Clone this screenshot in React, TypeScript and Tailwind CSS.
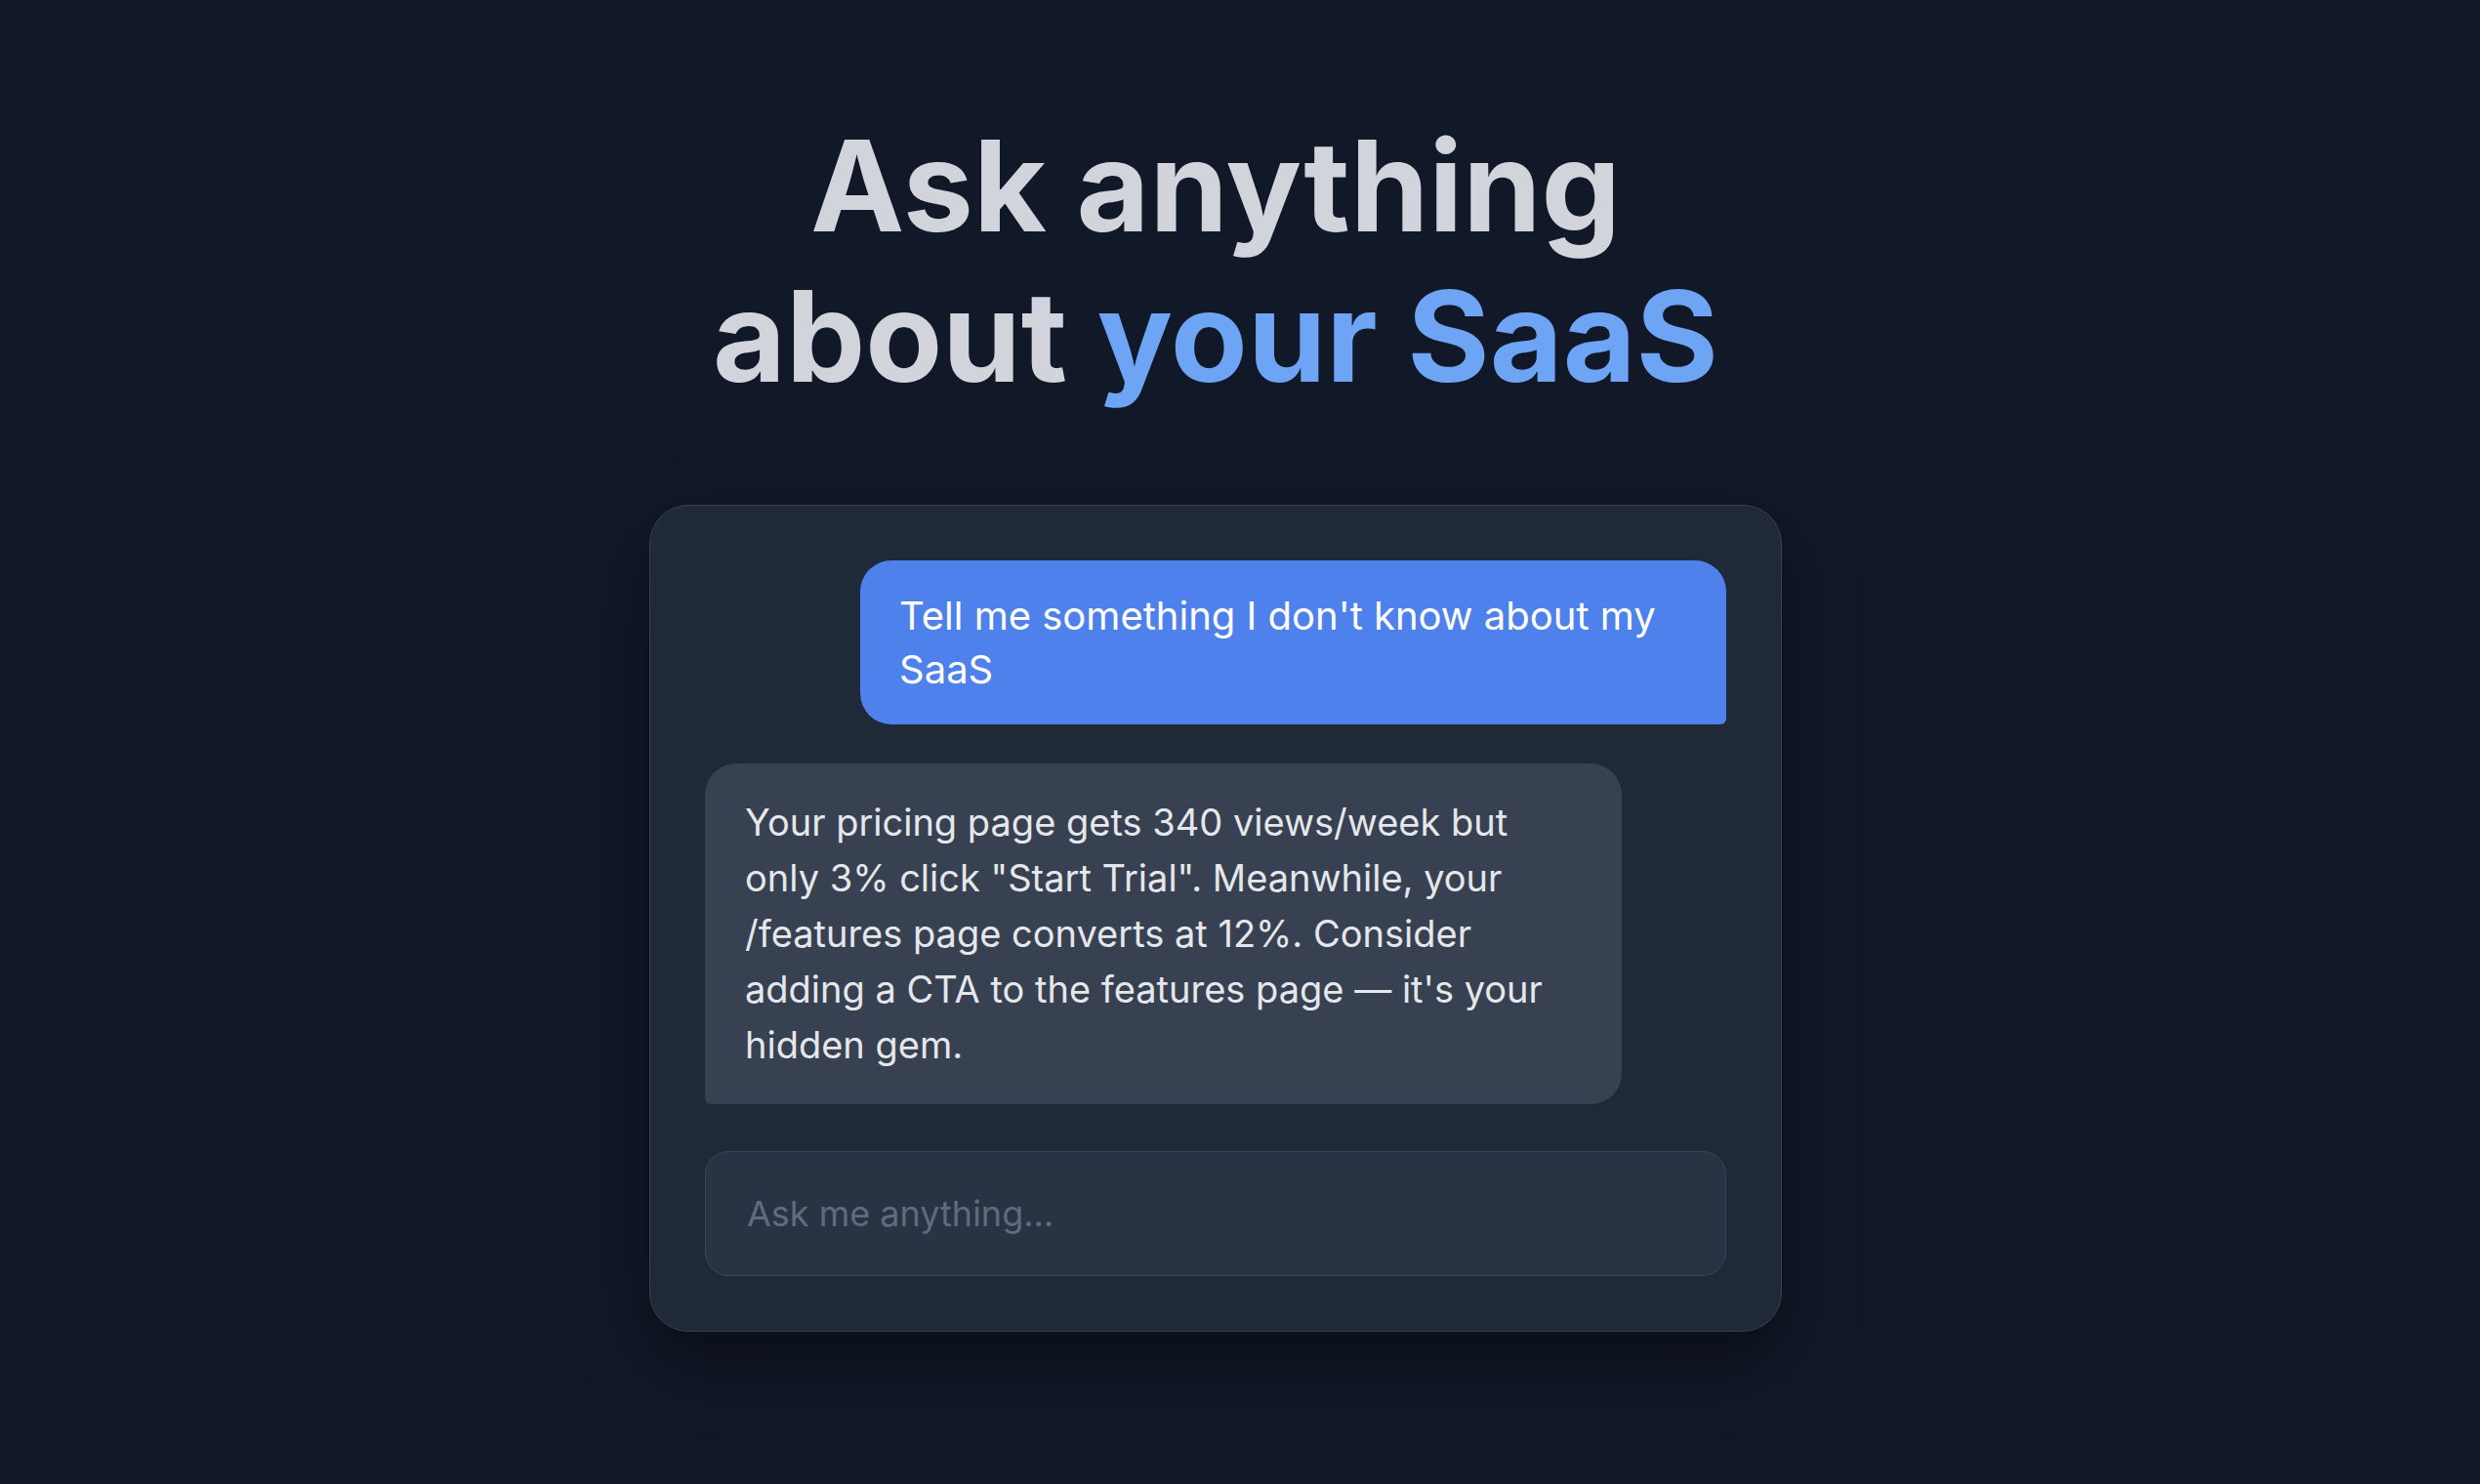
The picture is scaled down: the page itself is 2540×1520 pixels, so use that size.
import React from "react";

export default function App() {
  return (
    <div
      className="min-h-screen w-full bg-[#111827] flex flex-col items-center pr-[50px] pt-[113px]"
      style={{ fontFamily: "Inter, 'Noto Sans', sans-serif" }}
    >
      <h1 className="text-center font-bold text-[129px] leading-[154px] tracking-normal text-[#d1d5db]">
        Ask anything
        <br />
        about <span className="text-[#6ea4f4]">your SaaS</span>
      </h1>

      <div className="mt-[96px] w-[1160px] rounded-[40px] border border-[#374151] bg-[#1f2937] p-[56px] shadow-[0_30px_80px_-10px_rgba(0,0,0,0.55)] flex flex-col">
        <div className="flex justify-end">
          <div className="w-[887px] rounded-[32px] rounded-br-[6px] bg-[#4f81ec] px-[40px] py-[29px] text-[40px] leading-[55px] text-white">
            Tell me something I don't know about my SaaS
          </div>
        </div>

        <div className="mt-[40px] flex justify-start">
          <div className="w-[939px] rounded-[32px] rounded-bl-[6px] bg-[#374151] px-[41px] py-[32px] text-[38px] leading-[57px] text-[#e5e7eb]">
            Your pricing page gets 340 views/week but only 3% click "Start Trial". Meanwhile, your /features page converts at 12%. Consider adding a CTA to the features page — it's your hidden gem.
          </div>
        </div>

        <div className="mt-[48px] h-[128px] rounded-[24px] border border-[#3b4555] bg-[#2a3343] px-[42px] flex items-center">
          <input
            type="text"
            placeholder="Ask me anything..."
            className="w-full bg-transparent text-[36px] text-[#e5e7eb] placeholder:text-[#5f6b7e] outline-none"
            style={{ fontFamily: "Inter, 'Noto Sans', sans-serif" }}
          />
        </div>
      </div>
    </div>
  );
}
